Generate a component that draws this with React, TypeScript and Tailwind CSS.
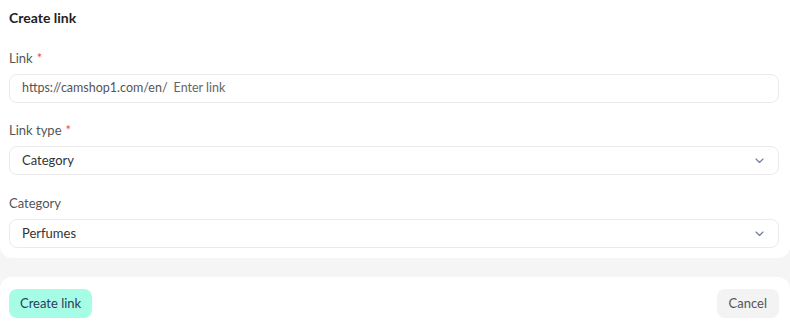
import React from "react";

function Chevron() {
  return (
    <svg width="9" height="6" viewBox="0 0 9 6" fill="none">
      <path d="M1 1l3.5 3.5L8 1" stroke="#6b7a99" strokeWidth="1.1" strokeLinecap="round" strokeLinejoin="round" />
    </svg>
  );
}

function Label({ children, required }: { children: React.ReactNode; required?: boolean }) {
  return (
    <div className="h-4 flex items-center text-[13px] leading-4 text-[#555]">
      {children}
      {required && <span className="ml-1 text-[#f04b4b]">*</span>}
    </div>
  );
}

export default function App() {
  return (
    <div className="w-[790px] h-[327px] overflow-hidden bg-[#f5f5f5]" style={{ fontFamily: "Lato, 'Noto Sans', sans-serif" }}>
      <div className="bg-white rounded-b-[12px] pl-[9px] pr-[11px] pt-[10px] pb-[10px] h-[258px] flex flex-col">
        <div className="h-4 leading-4 text-[14px] font-bold text-[#222]">Create link</div>
        <div className="mt-6 flex flex-col gap-2">
          <Label required>Link</Label>
          <div className="h-[29px] rounded-[8px] border border-[#ebebeb] flex items-center pl-3 text-[12.5px]">
            <span className="text-[#555]">https://camshop1.com/en/</span>
            <span className="ml-[6px] text-[#666]">Enter link</span>
          </div>
        </div>
        <div className="mt-[19px] flex flex-col gap-2">
          <Label required>Link type</Label>
          <div className="h-[29px] rounded-[8px] border border-[#ebebeb] flex items-center justify-between pl-3 pr-[14px] text-[13px] text-[#333]">
            <span>Category</span>
            <Chevron />
          </div>
        </div>
        <div className="mt-5 flex flex-col gap-2">
          <Label>Category</Label>
          <div className="h-[29px] rounded-[8px] border border-[#ebebeb] flex items-center justify-between pl-3 pr-[14px] text-[13px] text-[#333]">
            <span>Perfumes</span>
            <Chevron />
          </div>
        </div>
      </div>
      <div className="mt-[19px] bg-white rounded-t-[12px] h-[60px] pl-[9px] pr-[11px] pt-3 flex justify-between items-start">
        <button className="h-[29px] px-[11px] rounded-[8px] bg-[#a6fde6] text-[13px] text-[#2a3b5c]">Create link</button>
        <button className="h-[29px] px-3 rounded-[8px] bg-[#f3f3f3] text-[13px] text-[#555]">Cancel</button>
      </div>
    </div>
  );
}
